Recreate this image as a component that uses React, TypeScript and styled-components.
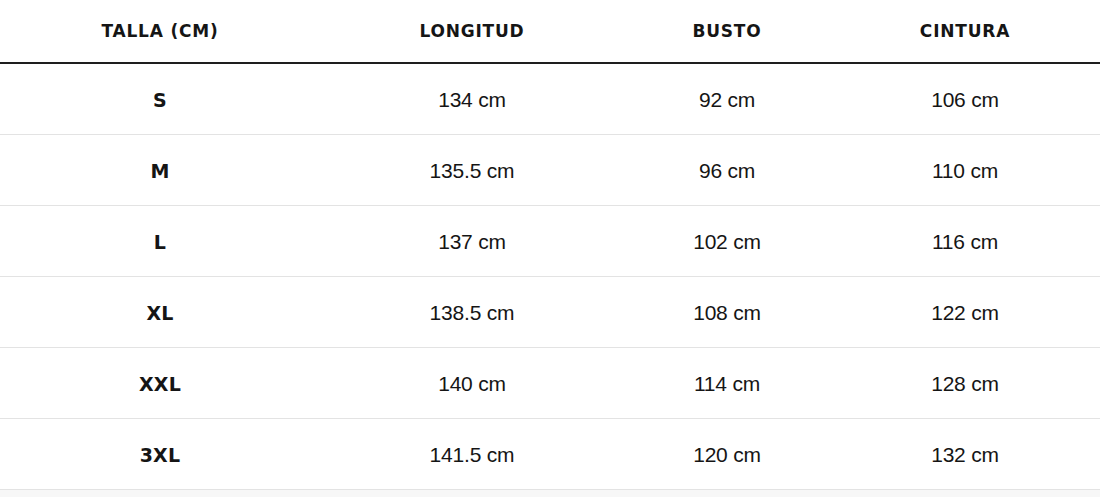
import React from "react";
import styled, { createGlobalStyle } from "styled-components";

const GlobalStyle = createGlobalStyle`
  html, body { margin: 0; padding: 0; background: #f7f7f7; }
  body { font-family: "Liberation Sans", Arial, sans-serif; color: #111; }
`;

const Table = styled.div`
  width: 1100px;
  background: #ffffff;
  display: flex;
  flex-direction: column;
`;

const Row = styled.div<{ $head?: boolean }>`
  display: grid;
  grid-template-columns: 320px 304px 206px 1fr;
  box-sizing: border-box;
  height: ${(p) => (p.$head ? "64px" : "71px")};
  border-bottom: ${(p) => (p.$head ? "2px solid #1e1e1e" : "1px solid #e3e3e3")};
  align-items: center;
  padding-top: ${(p) => (p.$head ? "0" : "2px")};
`;

const HeadCell = styled.div`
  text-align: center;
  font-family: "DejaVu Sans", "Liberation Sans", sans-serif;
  font-weight: 700;
  font-size: 17px;
  letter-spacing: 0.8px;
  text-transform: uppercase;
  color: #151515;
`;

const SizeCell = styled.div`
  text-align: center;
  font-family: "DejaVu Sans", "Liberation Sans", sans-serif;
  font-weight: 700;
  font-size: 19px;
  letter-spacing: 0.2px;
  color: #151515;
`;

const Cell = styled.div`
  text-align: center;
  font-size: 21px;
  letter-spacing: -0.2px;
  color: #151515;
`;

const headers = ["Talla (cm)", "Longitud", "Busto", "Cintura"];
const rows = [
  ["S", "134 cm", "92 cm", "106 cm"],
  ["M", "135.5 cm", "96 cm", "110 cm"],
  ["L", "137 cm", "102 cm", "116 cm"],
  ["XL", "138.5 cm", "108 cm", "122 cm"],
  ["XXL", "140 cm", "114 cm", "128 cm"],
  ["3XL", "141.5 cm", "120 cm", "132 cm"],
];

export default function App() {
  return (
    <>
      <GlobalStyle />
      <Table>
        <Row $head>
          {headers.map((h) => (
            <HeadCell key={h}>{h}</HeadCell>
          ))}
        </Row>
        {rows.map((r) => (
          <Row key={r[0]}>
            <SizeCell>{r[0]}</SizeCell>
            <Cell>{r[1]}</Cell>
            <Cell>{r[2]}</Cell>
            <Cell>{r[3]}</Cell>
          </Row>
        ))}
      </Table>
    </>
  );
}
